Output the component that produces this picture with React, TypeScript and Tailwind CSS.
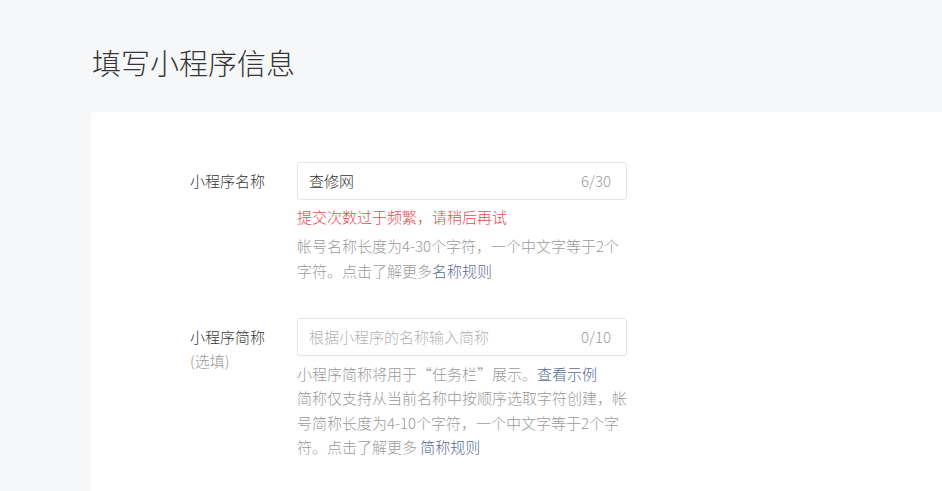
export default function App() {
  const font = { fontFamily: '"Noto Sans CJK SC", "Noto Sans", sans-serif' };
  return (
    <div
      className="min-h-[491px] w-full bg-[#f6f7f9] pl-[91px] pt-[42px] overflow-hidden font-light"
      style={font}
    >
      <h1 className="text-[29px] leading-[40px] text-[#353535] font-light pl-px">
        填写小程序信息
      </h1>
      <div className="mt-[30px] bg-white min-h-[400px] pl-[99px] pt-[50px] pb-10 rounded-tl-[4px]">
        {/* Row 1 */}
        <div className="flex">
          <div className="w-[107px] pt-[7px] text-[15px] leading-[24px] text-[#353535]">
            小程序名称
          </div>
          <div className="w-[330px]">
            <div className="h-[38px] border border-[#e5e5e5] rounded-[3px] flex items-center justify-between pl-[11px] pr-[15px] text-[15px]">
              <span className="text-[#353535]">查修网</span>
              <span className="text-[#9a9a9a]">6/30</span>
            </div>
            <div className="mt-[5px] text-[15px] leading-[24px] text-[#e84b4f]">
              提交次数过于频繁，请稍后再试
            </div>
            <div className="mt-[5px] text-[15px] leading-[24.5px] text-[#9a9a9a]">
              帐号名称长度为4-30个字符，一个中文字等于2个字符。点击了解更多
              <a className="text-[#576b95]">名称规则</a>
            </div>
          </div>
        </div>
        {/* Row 2 */}
        <div className="flex mt-[35px]">
          <div className="w-[107px] pt-[7px] text-[15px] leading-[24px]">
            <div className="text-[#353535]">小程序简称</div>
            <div className="text-[#9a9a9a]">(选填)</div>
          </div>
          <div className="w-[330px]">
            <div className="h-[38px] border border-[#e5e5e5] rounded-[3px] flex items-center justify-between pl-[11px] pr-[15px] text-[15px]">
              <span className="text-[#b2b2b2]">根据小程序的名称输入简称</span>
              <span className="text-[#9a9a9a]">0/10</span>
            </div>
            <div className="mt-[6px] text-[15px] leading-[24.3px] text-[#9a9a9a]">
              <div>
                小程序简称将用于“任务栏”展示。
                <a className="text-[#576b95]">查看示例</a>
              </div>
              <div>
                简称仅支持从当前名称中按顺序选取字符创建，帐号简称长度为4-10个字符，一个中文字等于2个字符。点击了解更多{" "}
                <a className="text-[#576b95]">简称规则</a>
              </div>
            </div>
          </div>
        </div>
      </div>
    </div>
  );
}
